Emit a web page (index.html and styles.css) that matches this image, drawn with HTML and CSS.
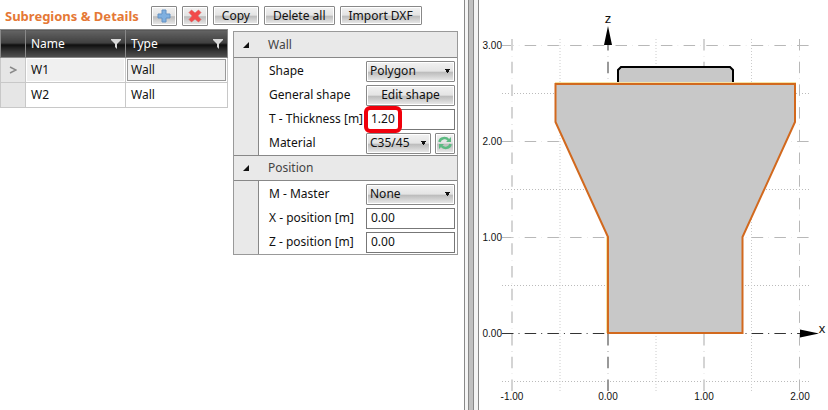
FILE: index.html
```html
<!DOCTYPE html>
<html lang="en">
<head>
<meta charset="utf-8">
<title>Subregions &amp; Details</title>
<link rel="stylesheet" href="styles.css">
</head>
<body>
<main class="app">
  <section class="editor">
    <header class="toolbar">
      <h1 class="title">Subregions &amp; Details</h1>
      <button class="btn btn-icon" type="button" aria-label="Add">
        <svg width="14" height="14" viewBox="0 0 14 14"><path d="M5 1h4v4h4v4H9v4H5V9H1V5h4z" fill="#7fb0e0" stroke="#6492c4"/></svg>
      </button>
      <button class="btn btn-icon" type="button" aria-label="Delete">
        <svg width="14" height="14" viewBox="0 0 14 14"><path d="M1 3.5 3.5 1 7 4 10.500 1 13 3.500 9.800 7 13 10.500 10.500 13 7 10 3.500 13 1 10.500 4.200 7z" fill="#f24a4a" stroke="#dc5a5a" stroke-width=".6"/></svg>
      </button>
      <button class="btn" type="button">Copy</button>
      <button class="btn" type="button">Delete all</button>
      <button class="btn" type="button">Import DXF</button>
    </header>
    <div class="panels">
      <table class="regions">
        <colgroup><col class="col-mark"><col class="col-name"><col class="col-type"></colgroup>
        <thead>
          <tr>
            <th></th>
            <th><span class="head">Name <svg width="10" height="12" viewBox="0 0 10 12"><path d="M0 1h10v1L6 6v5L4 9V6L0 2z" fill="#d8d8d8"/></svg></span></th>
            <th><span class="head">Type <svg width="10" height="12" viewBox="0 0 10 12"><path d="M0 1h10v1L6 6v5L4 9V6L0 2z" fill="#d8d8d8"/></svg></span></th>
          </tr>
        </thead>
        <tbody>
          <tr class="current">
            <td class="mark"><svg width="8" height="8" viewBox="0 0 8 8"><path d="M1 1l6 3-6 3" fill="none" stroke="#8a8a8a" stroke-width="1.500"/></svg></td>
            <td><span class="cell">W1</span></td>
            <td><span class="cell focus">Wall</span></td>
          </tr>
          <tr>
            <td class="mark"></td>
            <td><span class="cell">W2</span></td>
            <td><span class="cell">Wall</span></td>
          </tr>
        </tbody>
      </table>
      <form class="props">
        <h2 class="group"><svg width="8" height="8" viewBox="0 0 8 8"><path d="M7 1v6H1z" fill="#111"/></svg>Wall</h2>
        <div class="rows">
          <div class="row"><label for="shape">Shape</label>
            <select id="shape" class="field drop"><option>Polygon</option></select></div>
          <div class="row"><label for="edit">General shape</label>
            <button id="edit" class="field btn" type="button">Edit shape</button></div>
          <div class="row"><label for="thick">T - Thickness [m]</label>
            <span class="field marked"><input id="thick" class="text" type="text" value="1.20"></span></div>
          <div class="row"><label for="material">Material</label>
            <span class="field pair"><select id="material" class="drop"><option>C35/45</option></select>
            <button class="btn refresh" type="button" aria-label="Refresh material"><svg width="14" height="14" viewBox="0 0 14 14" fill="none" stroke="#5dba82" stroke-width="2.500"><path d="M1.500 6C2 1.500 8 1 10.500 4"/><path d="M12.500 8C12 12.500 6 13 3.500 10"/><path d="M13 1v5H8zM1 13V8h5z" fill="#5dba82" stroke="none"/></svg></button></span></div>
        </div>
        <h2 class="group"><svg width="8" height="8" viewBox="0 0 8 8"><path d="M7 1v6H1z" fill="#111"/></svg>Position</h2>
        <div class="rows">
          <div class="row"><label for="master">M - Master</label>
            <select id="master" class="field drop"><option>None</option></select></div>
          <div class="row"><label for="xpos">X - position [m]</label>
            <input id="xpos" class="field text" type="text" value="0.00"></div>
          <div class="row"><label for="zpos">Z - position [m]</label>
            <input id="zpos" class="field text" type="text" value="0.00"></div>
        </div>
      </form>
    </div>
  </section>
  <div class="splitter"></div>
  <section class="view">
    <svg class="chart" viewBox="479 0 349 410" role="img" aria-label="Wall section">
      <g class="dotted">
        <path d="M502 93.500H809M502 189.500H809M502 285.500H809M502 381.500H809"/>
        <path class="faint" d="M560 391V38M656 391V38M751.500 391V38"/>
      </g>
      <g class="grid">
        <path d="M502 45.500H809M502 141.500H809M502 237.500H809M799.500 391V38"/>
        <path class="wide" d="M512 391V38M704 391V38"/>
        <path class="axis-z" d="M608 391V45"/>
        <path class="axis-x" d="M502 333.500H800"/>
      </g>
      <path class="cap" d="M618 84V70l3-3h109l3 3v14z"/>
      <path class="glow" d="M555 82.500H796M606.500 237V333"/>
      <path class="wall" d="M555.500 84H795V122L742.500 237V333H608V237L555.500 122z"/>
      <path d="M608 26l4 19h-8zM819 333.500l-19-4v8z"/>
      <g class="axis-name"><text x="608" y="23">z</text><text x="822" y="333">x</text></g>
      <g class="ticks-z"><text x="502" y="49">3.00</text><text x="502" y="145">2.00</text><text x="502" y="241">1.00</text><text x="502" y="337">0.00</text></g>
      <g class="ticks-x"><text x="512" y="400">-1.00</text><text x="608" y="400">0.00</text><text x="704" y="400">1.00</text><text x="800" y="400">2.00</text></g>
    </svg>
  </section>
</main>
</body>
</html>
```
FILE: styles.css
```css
*, *::after { box-sizing: border-box; }
body {
  margin: 0;
  background: #fff;
  color: #111;
  font: 12px/16px "Noto Sans", "Open Sans", sans-serif;
}
button, input, select { font: inherit; color: inherit; margin: 0; }
.app { display: flex; min-height: 100vh; }
.editor { flex: 0 0 auto; padding: 5px 6px 0 0; }
.toolbar { display: flex; align-items: center; gap: 5px; height: 21px; padding-left: 5px; }
.title { margin: 0 7px 0 0; font-size: 13px; font-weight: 700; color: #e57835; }
.btn, .drop {
  border: 1px solid #888;
  border-radius: 1px;
  box-shadow: inset 0 0 0 1px #fff;
  background: linear-gradient(#f2f2f2, #e4e4e4 48%, #bcbcbc 54%, #cccccc 70%, #ececec);
}
.btn { height: 19px; padding: 0 8px; line-height: 16px; white-space: nowrap; }
.btn-icon { display: grid; place-items: center; width: 26px; height: 20px; padding: 0; }
.panels { display: flex; align-items: flex-start; gap: 5px; padding-top: 3px; }

.regions { width: 228px; table-layout: fixed; border-collapse: collapse; border: 1px solid #777; }
.col-mark { width: 25px; }
.col-name { width: 100px; }
.regions th {
  height: 28px;
  padding: 0 4px 0 5px;
  border: 1px solid #888;
  background: linear-gradient(#646464, #3e3e3e 48%, #0c0c0c 52%, #333 75%, #525252);
  color: #fff;
  font-weight: 400;
  text-align: left;
}
.head { display: flex; align-items: center; justify-content: space-between; }
.regions td { height: 25px; padding: 1px; border: 1px solid #c8c8c8; }
.regions .mark { background: #e6e6e6; text-align: center; }
.mark svg { display: block; margin: 0 auto; }
.cell { display: block; padding: 2px 3px; border: 1px solid transparent; }
.current .cell { background: #f0f0f0; }
.current .focus { border-color: #999; }

.props { width: 225px; margin-top: 2px; border: 1px solid #999; background: #e9e9e9; }
.group {
  display: flex;
  align-items: center;
  gap: 18px;
  height: 26px;
  margin: 0;
  padding-left: 8px;
  border-bottom: 1px solid #888;
  font-size: 12px;
  font-weight: 400;
  color: #444;
}
.rows + .group { border-top: 1px solid #888; }
.rows { margin-left: 24px; padding: 1px 2px 0 10px; border-left: 1px solid #888; background: #fff; }
.row { display: flex; align-items: center; justify-content: space-between; height: 24px; white-space: nowrap; }
.field { width: 89px; flex: none; }
.field, .drop, .text, .refresh { height: 21px; }
.drop {
  appearance: none;
  padding: 0 3px;
  background:
    conic-gradient(from -35deg at 50% 100%, #111 0 70deg, transparent 0) right 4px center / 5px 4px no-repeat,
    linear-gradient(#f2f2f2, #e4e4e4 48%, #bcbcbc 54%, #cccccc 70%, #ececec);
}
.text { padding: 0 4px 2px; border: 1px solid #777; border-radius: 0; background: #fff; outline: 0; }
.marked { position: relative; }
.marked .text { display: block; width: 100%; }
.marked::after {
  content: "";
  position: absolute;
  inset: -3px auto -3px -2px;
  width: 38px;
  border: 4px solid #f0000b;
  border-radius: 6px;
}
.pair { display: flex; justify-content: space-between; }
.pair .drop { width: 65px; }
.refresh { display: grid; place-items: center; width: 20px; padding: 0; }

.splitter {
  flex: 0 0 15px;
  border: solid #888;
  border-width: 0 1px;
  background: linear-gradient(90deg, #f4f4f4 3px, #888 3px 4px, #c0c0c0 4px 8px, #888 8px 9px, #f4f4f4 9px);
}
.view { flex: 1; min-width: 0; }
.chart { display: block; width: 100%; }
.chart path { fill: #000; }
.chart .dotted path, .chart .grid path, .chart .glow { fill: none; }
.dotted path { stroke: #bbb; stroke-dasharray: 1 2; }
.dotted .faint { stroke: #ccc; }
.grid path { stroke: #b8b8b8; stroke-dasharray: 11.500 5.400 .3 5.500; }
.grid .wide { stroke: #d4d4d4; stroke-width: 2; }
.grid .axis-z { stroke: #999; stroke-width: 2; }
.grid .axis-x { stroke: #333; stroke-dasharray: 11.500 5 1 5.200; }
.chart .cap { fill: #c8c8c8; stroke: #000; stroke-width: 2; }
.chart .glow { stroke: #f6e3a4; }
.chart .wall { fill: #c8c8c8; stroke: #d2691e; stroke-width: 2; }
.chart text { font-family: "Liberation Sans", Arial, sans-serif; font-size: 10px; fill: #111; }
.chart .axis-name text { font-size: 13px; text-anchor: middle; }
.ticks-z { text-anchor: end; }
.ticks-x { text-anchor: middle; }
```
